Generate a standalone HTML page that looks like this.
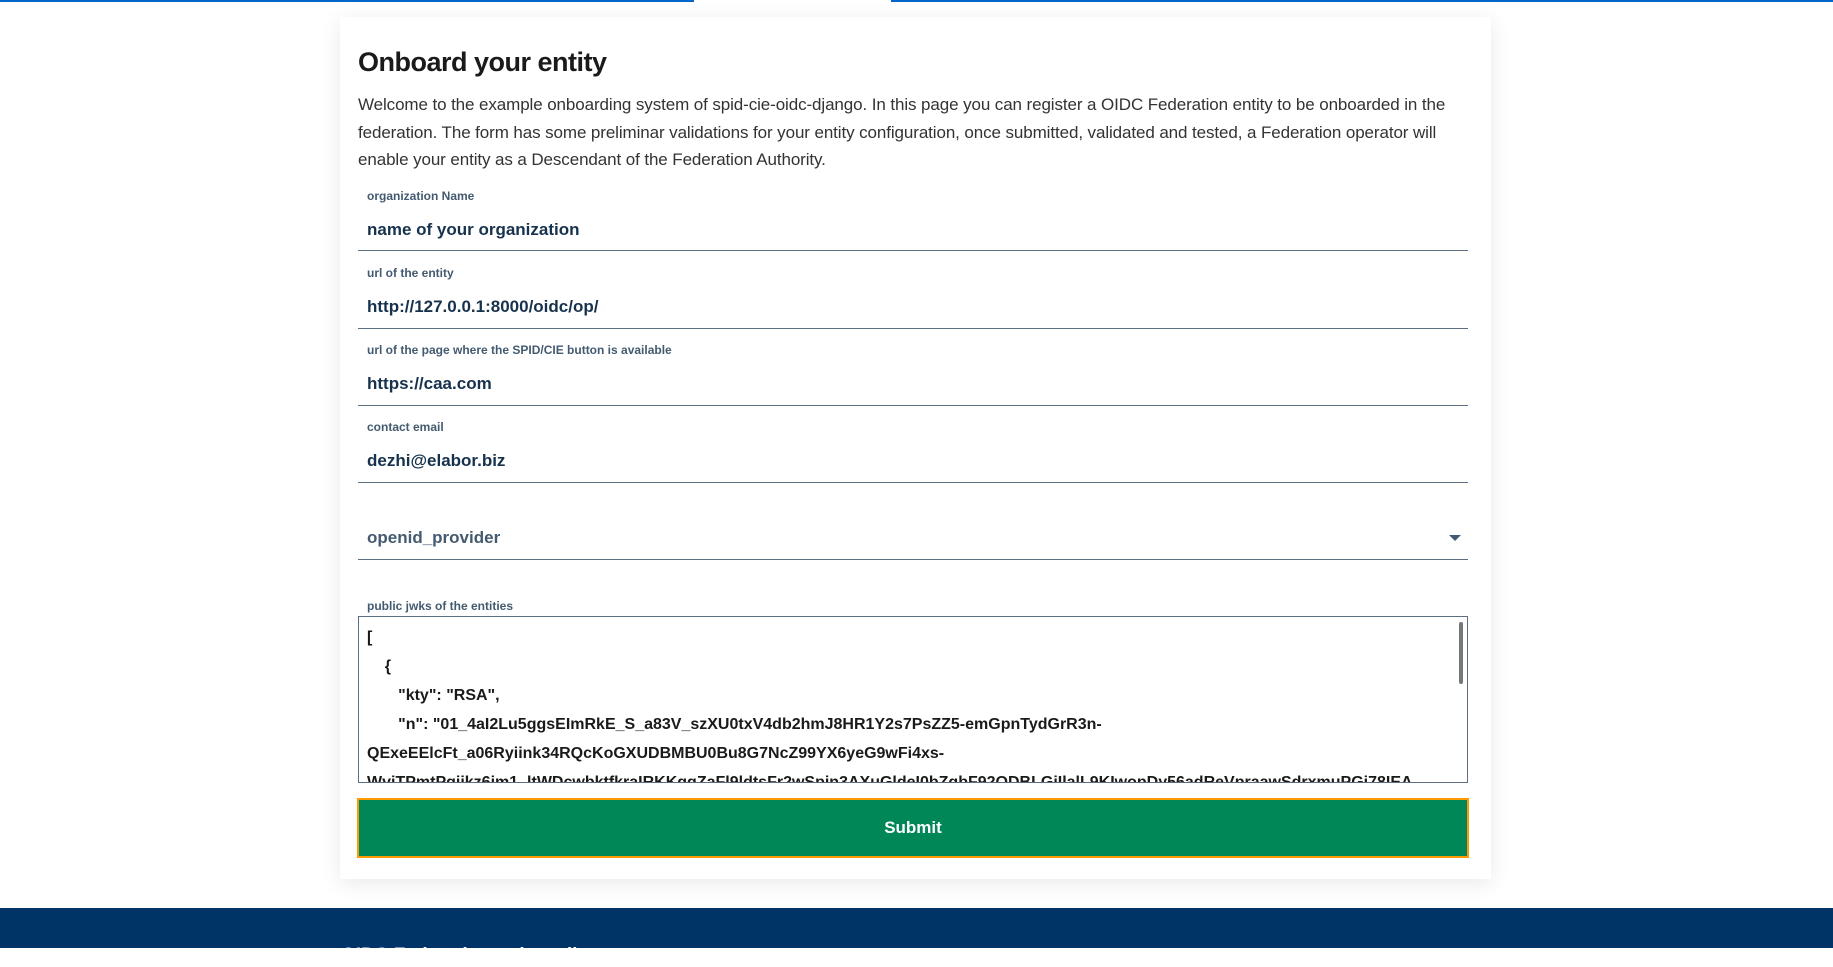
<!DOCTYPE html>
<html><head><meta charset="utf-8"><style>
*{margin:0;padding:0;box-sizing:border-box}
body{width:1833px;height:948px;overflow:hidden;background:#fff;font-family:"Liberation Sans",sans-serif;position:relative;color:#17324d}
.top1{position:absolute;top:0;left:0;width:694px;height:2px;background:#0066cc}
.top2{position:absolute;top:0;left:891px;right:0;height:2px;background:#0066cc}
.card{position:absolute;left:340px;top:17px;width:1151px;height:862px;background:#fff;box-shadow:0 4px 20px rgba(0,0,0,.09)}
h1{position:absolute;left:18px;top:30px;font-size:27px;font-weight:bold;color:#1a1a1a;letter-spacing:-.5px}
p{position:absolute;left:18px;top:74px;font-size:17px;line-height:27.5px;color:#333;white-space:nowrap;letter-spacing:-.1px}
.lab{position:absolute;left:27px;font-size:12px;font-weight:bold;color:#435a70}
.val{position:absolute;left:27px;font-size:17px;font-weight:bold;color:#17324d}
.line{position:absolute;left:18px;width:1110px;height:1px;background:#5c6f82}
.ta{position:absolute;left:18px;top:599px;width:1110px;height:167px;border:1px solid #5c6f82;overflow:hidden;font-size:16px;font-weight:bold;color:#1a1a1a;line-height:29px;padding:6px 8px;white-space:nowrap}
.sb{position:absolute;right:4px;top:5px;width:4px;height:62px;background:#777;border-radius:2px}
.btn{position:absolute;left:17px;top:781px;width:1112px;height:60px;background:#008758;border:2px solid #ff9900;color:#fff;font-weight:bold;font-size:17px;text-align:center;line-height:56px}
.foot{position:absolute;left:0;top:908px;width:1833px;height:40px;background:#003366}
.foot span{position:absolute;left:341px;top:37px;color:#fff;font-weight:bold;font-size:19px}
</style></head><body>
<div class="top1"></div><div class="top2"></div>
<div class="card">
<h1>Onboard your entity</h1>
<p>Welcome to the example onboarding system of spid-cie-oidc-django. In this page you can register a OIDC Federation entity to be onboarded in the<br>federation. The form has some preliminar validations for your entity configuration, once submitted, validated and tested, a Federation operator will<br>enable your entity as a Descendant of the Federation Authority.</p>
<div class="lab" style="top:172px">organization Name</div>
<div class="val" style="top:203px">name of your organization</div>
<div class="line" style="top:233px"></div>
<div class="lab" style="top:249px">url of the entity</div>
<div class="val" style="top:280px">http://127.0.0.1:8000/oidc/op/</div>
<div class="line" style="top:311px"></div>
<div class="lab" style="top:326px">url of the page where the SPID/CIE button is available</div>
<div class="val" style="top:357px">https://caa.com</div>
<div class="line" style="top:388px"></div>
<div class="lab" style="top:403px">contact email</div>
<div class="val" style="top:434px">dezhi@elabor.biz</div>
<div class="line" style="top:465px"></div>
<div class="val" style="top:511px;color:#435a70">openid_provider</div>
<svg style="position:absolute;left:1109px;top:518px" width="12" height="7"><path d="M0 0H12L6 6Z" fill="#435a70"/></svg>
<div class="line" style="top:542px"></div>
<div class="lab" style="top:582px">public jwks of the entities</div>
<div class="ta">[<br>&nbsp;&nbsp;&nbsp;&nbsp;{<br>&nbsp;&nbsp;&nbsp;&nbsp;&nbsp;&nbsp;&nbsp;"kty": "RSA",<br>&nbsp;&nbsp;&nbsp;&nbsp;&nbsp;&nbsp;&nbsp;"n": "01_4aI2Lu5ggsEImRkE_S_a83V_szXU0txV4db2hmJ8HR1Y2s7PsZZ5-emGpnTydGrR3n-<br>QExeEElcFt_a06Ryiink34RQcKoGXUDBMBU0Bu8G7NcZ99YX6yeG9wFi4xs-<br>WviTPmtPqiikz6im1_ltWDcwbktfkraIRKKggZaFl9ldtsFr2wSpjn3AXuGldeI0bZgbF92ODBLGjIlalL9KIwopDy56adReVpraawSdrxmuPGj78IEA<div class="sb"></div></div>
<div class="btn">Submit</div>
</div>
<div class="foot"><span>OIDC Federation onboarding system</span></div>
</body></html>
